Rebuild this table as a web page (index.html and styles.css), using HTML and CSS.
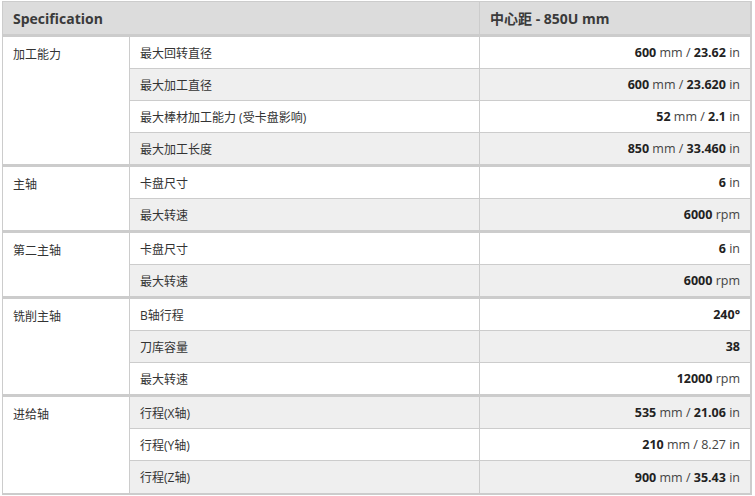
FILE: index.html
```html
<!DOCTYPE html>
<html lang="zh">
<head>
<meta charset="utf-8">
<link rel="stylesheet" href="styles.css">
</head>
<body>
<table class="spec">
  <colgroup>
    <col class="c-group">
    <col class="c-name">
    <col class="c-val">
  </colgroup>
  <thead>
    <tr>
      <th colspan="2">Specification</th>
      <th>中心距 - 850U mm</th>
    </tr>
  </thead>
  <tbody>
    <tr><td class="grp" rowspan="4">加工能力</td><td class="name">最大回转直径</td><td class="val"><b>600</b> mm / <b>23.62</b> in</td></tr>
    <tr class="alt"><td class="name">最大加工直径</td><td class="val"><b>600</b> mm / <b>23.620</b> in</td></tr>
    <tr><td class="name">最大棒材加工能力 (受卡盘影响)</td><td class="val"><b>52</b> mm / <b>2.1</b> in</td></tr>
    <tr class="alt"><td class="name">最大加工长度</td><td class="val"><b>850</b> mm / <b>33.460</b> in</td></tr>
  </tbody>
  <tbody>
    <tr><td class="grp" rowspan="2">主轴</td><td class="name">卡盘尺寸</td><td class="val"><b>6</b> in</td></tr>
    <tr class="alt"><td class="name">最大转速</td><td class="val"><b>6000</b> rpm</td></tr>
  </tbody>
  <tbody>
    <tr><td class="grp" rowspan="2">第二主轴</td><td class="name">卡盘尺寸</td><td class="val"><b>6</b> in</td></tr>
    <tr class="alt"><td class="name">最大转速</td><td class="val"><b>6000</b> rpm</td></tr>
  </tbody>
  <tbody>
    <tr><td class="grp" rowspan="3">铣削主轴</td><td class="name">B轴行程</td><td class="val"><b>240°</b></td></tr>
    <tr class="alt"><td class="name">刀库容量</td><td class="val"><b>38</b></td></tr>
    <tr><td class="name">最大转速</td><td class="val"><b>12000</b> rpm</td></tr>
  </tbody>
  <tbody class="last">
    <tr class="alt"><td class="grp" rowspan="3">进给轴</td><td class="name">行程(X轴)</td><td class="val"><b>535</b> mm / <b>21.06</b> in</td></tr>
    <tr><td class="name">行程(Y轴)</td><td class="val"><b>210</b> mm / 8.27 in</td></tr>
    <tr class="alt"><td class="name">行程(Z轴)</td><td class="val"><b>900</b> mm / <b>35.43</b> in</td></tr>
  </tbody>
</table>
</body>
</html>
```

FILE: styles.css
```css
html, body {
  margin: 0;
  padding: 0;
  background: #fff;
}
body {
  padding: 1px 3px 0 2px;
  font-family: "Open Sans", "Noto Sans CJK SC", sans-serif;
  font-size: 12px;
  color: #333;
}
.spec {
  width: 750px;
  border-collapse: collapse;
  border: 1px solid #ccc;
  border-right-width: 2px;
  border-bottom-width: 2px;
  table-layout: fixed;
}
.c-group { width: 127px; }
.c-name { width: 350px; }
.spec th {
  background: #dcdcdc;
  font-weight: bold;
  font-size: 14px;
  text-align: left;
  height: 32px;
  padding: 0 10px;
  color: #3a3a3a;
  border: 1px solid #ccc;
  border-bottom: 3px solid #ccc;
}
.spec tbody {
  border-top: 3px solid #ccc;
}
.spec td {
  height: 31px;
  padding: 0 10px;
  border: 1px solid #ccc;
  vertical-align: middle;
}
.spec tbody.last tr:last-child td {
  height: 32px;
}
.spec td.grp {
  vertical-align: top;
  padding-top: 8px;
  background: #fff;
}
.spec tr.alt td.name,
.spec tr.alt td.val {
  background: #efefef;
}
.spec td.val {
  text-align: right;
  font-size: 12.5px;
  color: #444;
}
.spec td.val b {
  color: #222;
}
```
